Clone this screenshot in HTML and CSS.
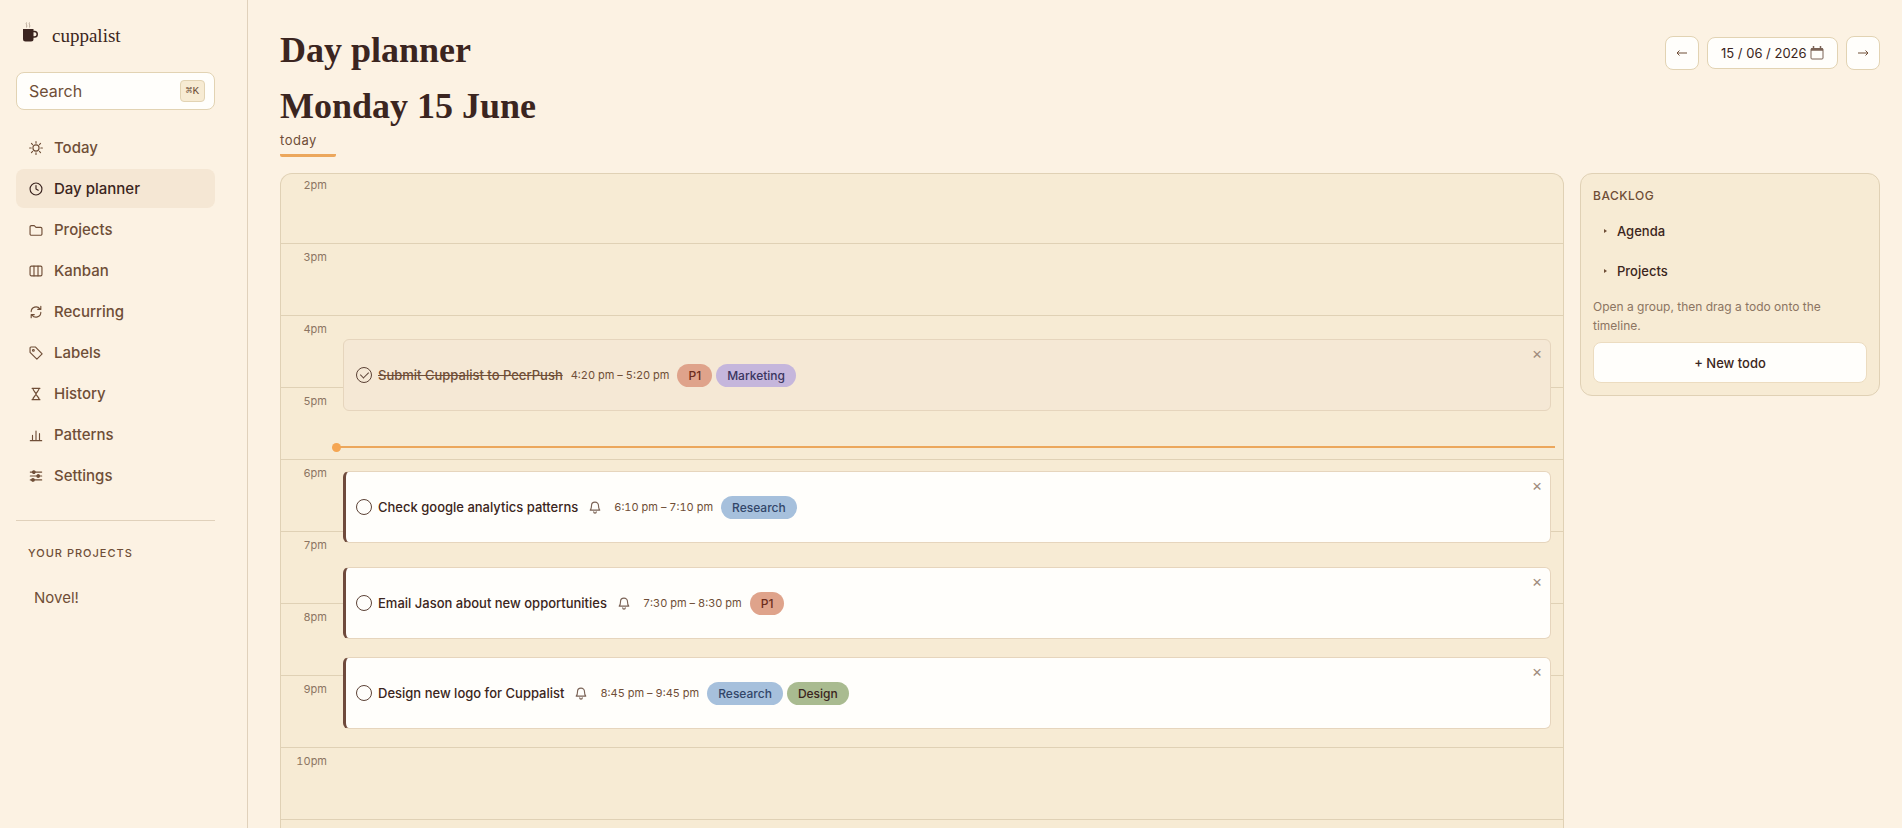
FILE: index.html
```html
<!DOCTYPE html>
<html lang="en">
<head>
    <meta charset="UTF-8">
    <meta name="viewport" content="width=device-width, initial-scale=1.0">
    <title>Day planner - cuppalist</title>
    <link rel="stylesheet" href="styles.css">
</head>
<body>
    <aside class="sidebar">
        <a href="#" class="logo">
            <svg class="logo-icon" viewBox="0 0 20 24" width="20" height="24" fill="none">
                <path d="M6.500 1.500c-1 1.500 1 2.500 0 5M9.500 1.500c-1 1.500 1 2.500 0 5" stroke="#a39282" stroke-width="0.8"/>
                <path d="M3 8h10.500v10a2.500 2.500 0 0 1-2.500 2.500H5.500A2.500 2.500 0 0 1 3 18z" fill="#3b2520"/>
                <path d="M13 10.500h1.500a2.500 2.500 0 0 1 0 5.500H13" stroke="#3b2520" stroke-width="1.500"/>
            </svg>
            <span>cuppalist</span>
        </a>

        <label class="search">
            <input type="search" class="search-input" placeholder="Search" aria-label="Search">
            <kbd>⌘K</kbd>
        </label>

        <nav class="nav">
            <a href="#" class="nav-item">
                <svg class="icon" viewBox="0 0 16 16"><circle cx="8" cy="8" r="3.500"/><path d="M8 .7v1.800M8 13.500v1.800M.7 8h1.800M13.500 8h1.800M2.800 2.800l1.300 1.300M11.900 11.900l1.300 1.300M2.800 13.200l1.300-1.300M11.900 4.100l1.300-1.300"/></svg>
                Today
            </a>
            <a href="#" class="nav-item active">
                <svg class="icon" viewBox="0 0 16 16"><circle cx="8" cy="8" r="6.800"/><path d="M8 4v4l2.500 1.500"/></svg>
                Day planner
            </a>
            <a href="#" class="nav-item">
                <svg class="icon" viewBox="0 0 16 16"><path d="M1.200 12.500v-8a1.500 1.500 0 0 1 1.500-1.500H6l2 2h5.300a1.500 1.500 0 0 1 1.500 1.500v6a1.500 1.500 0 0 1-1.500 1.500H2.700a1.500 1.500 0 0 1-1.500-1.500z"/></svg>
                Projects
            </a>
            <a href="#" class="nav-item">
                <svg class="icon" viewBox="0 0 16 16"><rect x="1.200" y="2.500" width="13.600" height="11" rx="1.500"/><path d="M5.700 2.500v11M10.300 2.500v11"/></svg>
                Kanban
            </a>
            <a href="#" class="nav-item">
                <svg class="icon" viewBox="0 0 16 16"><path d="M2.500 7.500a5.500 5.500 0 0 1 10-3M13.500 1.500v3.500H10M13.500 8.500a5.500 5.500 0 0 1-10 3M2.500 14.500V11H6"/></svg>
                Recurring
            </a>
            <a href="#" class="nav-item">
                <svg class="icon" viewBox="0 0 16 16"><path d="M1.200 2.200v5L9 15l6-6-7.500-7.800H2.200a1 1 0 0 0-1 1z"/><circle cx="5" cy="5" r="1"/></svg>
                Labels
            </a>
            <a href="#" class="nav-item">
                <svg class="icon" viewBox="0 0 16 16"><path d="M3.500 1.500h9M3.500 14.500h9M4.500 1.500c0 3.500 3.500 4.500 3.500 6.500s-3.500 3-3.500 6.500M11.500 1.500c0 3.500-3.500 4.500-3.500 6.500s3.500 3 3.500 6.500"/></svg>
                History
            </a>
            <a href="#" class="nav-item">
                <svg class="icon" viewBox="0 0 16 16"><path d="M1.500 14.500h13M4 14V8.500M8 14V3.500M12 14V6.500"/></svg>
                Patterns
            </a>
            <a href="#" class="nav-item">
                <svg class="icon" viewBox="0 0 16 16"><path d="M1.500 3.500h13M1.500 8h13M1.500 12.500h13"/><g fill="currentColor"><circle cx="5.500" cy="3.500" r="1.500"/><circle cx="10.500" cy="8" r="1.500"/><circle cx="4.500" cy="12.500" r="1.500"/></g></svg>
                Settings
            </a>
        </nav>

        <section class="projects">
            <h2 class="projects-title">Your projects</h2>
            <a href="#" class="project-link">Novel!</a>
        </section>
    </aside>

    <main class="main">
        <header class="header">
            <div>
                <h1 class="title">Day planner</h1>
                <h2 class="title">Monday 15 June</h2>
                <p class="day-tag">today</p>
            </div>
            <div class="date-nav">
                <button type="button" class="arrow" aria-label="Previous day">
                    <svg viewBox="0 0 12 12" width="12" height="12"><path d="M11 6H1M3.500 3.500L1 6l2.500 2.500"/></svg>
                </button>
                <label class="date-field">
                    <input type="text" class="date-input" value="15 / 06 / 2026" aria-label="Date">
                    <svg viewBox="0 0 14 14" width="14" height="14" fill="none" stroke="#7a6255"><rect x="1" y="2.500" width="12" height="10.500" rx="1"/><path d="M1 3.500h12" stroke-width="2.500"/><path d="M3.500 0v2M10.500 0v2" stroke-width="1.500"/></svg>
                </label>
                <button type="button" class="arrow" aria-label="Next day">
                    <svg viewBox="0 0 12 12" width="12" height="12"><path d="M1 6h10M8.500 3.500L11 6 8.500 8.500"/></svg>
                </button>
            </div>
        </header>

        <div class="planner">
            <section class="timeline">
                <div class="hours">
                    <div class="hour"><span>2pm</span></div>
                    <div class="hour"><span>3pm</span></div>
                    <div class="hour"><span>4pm</span></div>
                    <div class="hour"><span>5pm</span></div>
                    <div class="hour"><span>6pm</span></div>
                    <div class="hour"><span>7pm</span></div>
                    <div class="hour"><span>8pm</span></div>
                    <div class="hour"><span>9pm</span></div>
                    <div class="hour"><span>10pm</span></div>
                    <div class="hour"></div>

                    <!-- top = minutes since 2pm * 1.2 -->
                    <article class="event done" style="top: 168px">
                        <input type="checkbox" class="check" id="todo-1" checked>
                        <label class="event-title" for="todo-1">Submit Cuppalist to PeerPush</label>
                        <span class="event-time">4:20 pm – 5:20 pm</span>
                        <div class="tags">
                            <span class="tag priority">P1</span>
                            <span class="tag marketing">Marketing</span>
                        </div>
                        <button type="button" class="remove" aria-label="Remove">×</button>
                    </article>

                    <div class="now" style="top: 275px"></div>

                    <article class="event" style="top: 300px">
                        <input type="checkbox" class="check" id="todo-2">
                        <label class="event-title" for="todo-2">Check google analytics patterns</label>
                        <button type="button" class="bell" aria-label="Reminder">
                            <svg class="icon" viewBox="0 0 16 16"><path d="M2.500 11.500h11c-1-1-1.500-2-1.500-5a4 4 0 0 0-8 0c0 3-.5 4-1.500 5zM6.500 13.500a1.500 1.500 0 0 0 3 0"/></svg>
                        </button>
                        <span class="event-time">6:10 pm – 7:10 pm</span>
                        <div class="tags">
                            <span class="tag research">Research</span>
                        </div>
                        <button type="button" class="remove" aria-label="Remove">×</button>
                    </article>

                    <article class="event" style="top: 396px">
                        <input type="checkbox" class="check" id="todo-3">
                        <label class="event-title" for="todo-3">Email Jason about new opportunities</label>
                        <button type="button" class="bell" aria-label="Reminder">
                            <svg class="icon" viewBox="0 0 16 16"><path d="M2.500 11.500h11c-1-1-1.500-2-1.500-5a4 4 0 0 0-8 0c0 3-.5 4-1.500 5zM6.500 13.500a1.500 1.500 0 0 0 3 0"/></svg>
                        </button>
                        <span class="event-time">7:30 pm – 8:30 pm</span>
                        <div class="tags">
                            <span class="tag priority">P1</span>
                        </div>
                        <button type="button" class="remove" aria-label="Remove">×</button>
                    </article>

                    <article class="event" style="top: 486px">
                        <input type="checkbox" class="check" id="todo-4">
                        <label class="event-title" for="todo-4">Design new logo for Cuppalist</label>
                        <button type="button" class="bell" aria-label="Reminder">
                            <svg class="icon" viewBox="0 0 16 16"><path d="M2.500 11.500h11c-1-1-1.500-2-1.500-5a4 4 0 0 0-8 0c0 3-.5 4-1.500 5zM6.500 13.500a1.500 1.500 0 0 0 3 0"/></svg>
                        </button>
                        <span class="event-time">8:45 pm – 9:45 pm</span>
                        <div class="tags">
                            <span class="tag research">Research</span>
                            <span class="tag design">Design</span>
                        </div>
                        <button type="button" class="remove" aria-label="Remove">×</button>
                    </article>
                </div>
            </section>

            <aside class="backlog">
                <h2 class="backlog-title">Backlog</h2>
                <button type="button" class="group"><span class="caret"></span>Agenda</button>
                <button type="button" class="group"><span class="caret"></span>Projects</button>
                <p class="hint">Open a group, then drag a todo onto the timeline.</p>
                <button type="button" class="new-todo">+ New todo</button>
            </aside>
        </div>
    </main>
</body>
</html>
```

FILE: styles.css
```css
* {
    box-sizing: border-box;
}

body {
    display: flex;
    height: 100vh;
    margin: 0;
    overflow: hidden;
    background-color: #fcf2e3;
    color: #3b2520;
    font-family: Inter, sans-serif;
    font-size: 13px;
}

h1, h2, p {
    margin: 0;
}

a {
    color: inherit;
    text-decoration: none;
}

button, input {
    font-family: inherit;
    color: inherit;
}

button {
    cursor: pointer;
}

.icon {
    width: 14px;
    height: 14px;
    flex: none;
    fill: none;
    stroke: currentColor;
    stroke-width: 1.3;
    stroke-linecap: round;
    stroke-linejoin: round;
}

/* sidebar */
.sidebar {
    flex: none;
    width: 248px;
    padding: 20px 32px 0 16px;
    border-right: 1px solid #e0d1bb;
}

.logo {
    display: flex;
    align-items: center;
    gap: 12px;
    height: 32px;
    padding-left: 4px;
    margin-bottom: 20px;
    font-family: "Liberation Serif", serif;
    font-size: 19px;
}

.logo-icon {
    margin-bottom: 6px;
}

.search {
    display: flex;
    align-items: center;
    height: 38px;
    padding: 0 9px 0 12px;
    margin-bottom: 18px;
    background-color: #fffefb;
    border: 1px solid #e2d3b3;
    border-radius: 8px;
}

.search-input {
    flex: 1;
    min-width: 0;
    padding: 0;
    border: none;
    background: none;
    outline: none;
    font-size: 16px;
}

.search-input::placeholder {
    color: #6f4e37;
}

kbd {
    padding: 0 5px;
    background-color: #f7ebd3;
    border: 1px solid #e2d3b3;
    border-radius: 4px;
    color: #6f4e37;
    font-family: "Liberation Mono", "DejaVu Sans Mono", monospace;
    font-size: 11px;
    line-height: 20px;
}

.nav {
    display: flex;
    flex-direction: column;
    gap: 2px;
    padding-bottom: 25px;
    border-bottom: 1px solid #e0d1bb;
}

.nav-item {
    display: flex;
    align-items: center;
    gap: 11px;
    height: 39px;
    padding: 0 13px;
    border-radius: 8px;
    color: #6f4e37;
    font-size: 15px;
    font-weight: 500;
}

.nav-item.active {
    background-color: #f5e7d4;
    color: #3b2520;
}

.projects {
    padding: 24px 12px;
}

.projects-title {
    color: #6f4e37;
    font-size: 11px;
    font-weight: 500;
    line-height: 16px;
    letter-spacing: 1px;
    text-transform: uppercase;
}

.project-link {
    display: block;
    padding: 25px 6px;
    color: #6f4e37;
    font-size: 15px;
    line-height: 24px;
}

/* main column */
.main {
    display: flex;
    flex: 1;
    flex-direction: column;
    min-width: 0;
    padding: 22px 22px 0 32px;
}

.header {
    display: flex;
    justify-content: space-between;
    align-items: flex-start;
    margin-bottom: 16px;
}

.title {
    font-family: "Liberation Serif", serif;
    font-size: 36px;
    font-weight: 700;
    line-height: 56px;
}

.day-tag {
    width: 56px;
    padding-bottom: 8px;
    border-bottom: 3px solid #eca75c;
    border-radius: 2px;
    color: #6f4e37;
    font-size: 13px;
    line-height: 12px;
    letter-spacing: 0.5px;
}

.date-nav {
    display: flex;
    align-items: center;
    gap: 8px;
    padding-top: 14px;
}

.arrow,
.date-field {
    background-color: #fffefb;
    border: 1px solid #e2d3b3;
    border-radius: 8px;
}

.arrow {
    display: grid;
    place-items: center;
    width: 34px;
    height: 34px;
    padding: 0;
    color: #6f4e37;
}

.arrow svg {
    fill: none;
    stroke: currentColor;
}

.date-field {
    display: flex;
    align-items: center;
    gap: 2px;
    width: 131px;
    height: 32px;
    padding: 0 13px;
}

.date-input {
    flex: 1;
    min-width: 0;
    padding: 0;
    border: none;
    background: none;
    outline: none;
    font-size: 13px;
}

.planner {
    display: flex;
    flex: 1;
    align-items: flex-start;
    gap: 16px;
    min-height: 0;
}

/* timeline */
.timeline {
    flex: 1;
    height: 100%;
    overflow: hidden;
    background-color: #f7ebd4;
    border: 1px solid #e0d1b5;
    border-bottom: none;
    border-radius: 12px 12px 0 0;
}

.hours {
    position: relative;
    margin-top: -3px;
}

.hour {
    height: 72px;
    padding-top: 5px;
    border-top: 1px solid #e0d1b5;
}

.hour span {
    display: block;
    width: 46px;
    color: #8c7562;
    font-size: 11px;
    font-variant-numeric: tabular-nums;
    line-height: 16px;
    text-align: right;
}

.event {
    position: absolute;
    left: 62px;
    right: 12px;
    display: flex;
    align-items: center;
    height: 72px;
    padding-left: 10px;
    background-color: #fffefb;
    border: 1px solid #e6d5bd;
    border-left: 3px solid #6f4a3c;
    border-radius: 6px;
}

.event.done {
    padding-left: 12px;
    background-color: #f5e8d5;
    border-left: 1px solid #e6d5bd;
}

.check {
    appearance: none;
    display: grid;
    place-items: center;
    width: 16px;
    height: 16px;
    margin: 0 6px 0 0;
    border: 1px solid #5c4236;
    border-radius: 50%;
}

.check:checked::before {
    content: "";
    width: 4px;
    height: 7px;
    margin-bottom: 2px;
    border: solid #5c4236;
    border-width: 0 1px 1px 0;
    transform: rotate(45deg);
}

.event-title {
    margin-right: 8px;
    font-size: 13px;
    font-weight: 500;
}

.done .event-title {
    color: #6f4e37;
    text-decoration: line-through;
}

.bell {
    display: flex;
    width: 20px;
    padding: 0 2px;
    margin-right: 8px;
    border: none;
    background: none;
    color: #7a6255;
}

.event-time {
    margin-right: 8px;
    color: #6f4e37;
    font-size: 11px;
    font-variant-numeric: tabular-nums;
}

.tags {
    display: flex;
    gap: 4px;
}

.tag {
    padding: 0 11px;
    border-radius: 12px;
    font-size: 12px;
    font-weight: 500;
    line-height: 23px;
}

.priority {
    background-color: #dfa38b;
    color: #6b2d1c;
}

.marketing {
    background-color: #c5b6dc;
    color: #3a3560;
}

.research {
    background-color: #a6c0dc;
    color: #324669;
}

.design {
    background-color: #a9bb90;
    color: #3b2520;
}

.remove {
    position: absolute;
    top: 4px;
    right: 4px;
    width: 18px;
    height: 18px;
    padding: 0;
    border: none;
    background: none;
    color: #a08c7c;
    font-size: 16px;
    line-height: 16px;
}

.now {
    position: absolute;
    left: 56px;
    right: 8px;
    height: 2px;
    background-color: #eca75c;
}

.now::before {
    content: "";
    position: absolute;
    top: -3px;
    left: -5px;
    width: 9px;
    height: 9px;
    border-radius: 50%;
    background-color: #f5a653;
}

/* backlog */
.backlog {
    display: flex;
    flex: none;
    flex-direction: column;
    width: 300px;
    padding: 12px;
    background-color: #f7ebd4;
    border: 1px solid #e0d1b5;
    border-radius: 12px;
}

.backlog-title {
    margin-bottom: 5px;
    color: #6f4e37;
    font-size: 12px;
    font-weight: 500;
    line-height: 20px;
    letter-spacing: 0.5px;
    text-transform: uppercase;
}

.group {
    display: flex;
    align-items: center;
    gap: 10px;
    height: 40px;
    padding: 0 11px;
    border: none;
    background: none;
    font-size: 13px;
    font-weight: 500;
}

.caret {
    width: 3px;
    height: 4px;
    background-color: #6f4e37;
    clip-path: polygon(0 0, 100% 50%, 0 100%);
}

.hint {
    margin: 6px 0 7px;
    color: #8c7562;
    font-size: 12px;
    line-height: 19px;
}

.new-todo {
    height: 41px;
    background-color: #fffefb;
    border: 1px solid #ecdcc0;
    border-radius: 8px;
    font-size: 13px;
    font-weight: 500;
}
```
